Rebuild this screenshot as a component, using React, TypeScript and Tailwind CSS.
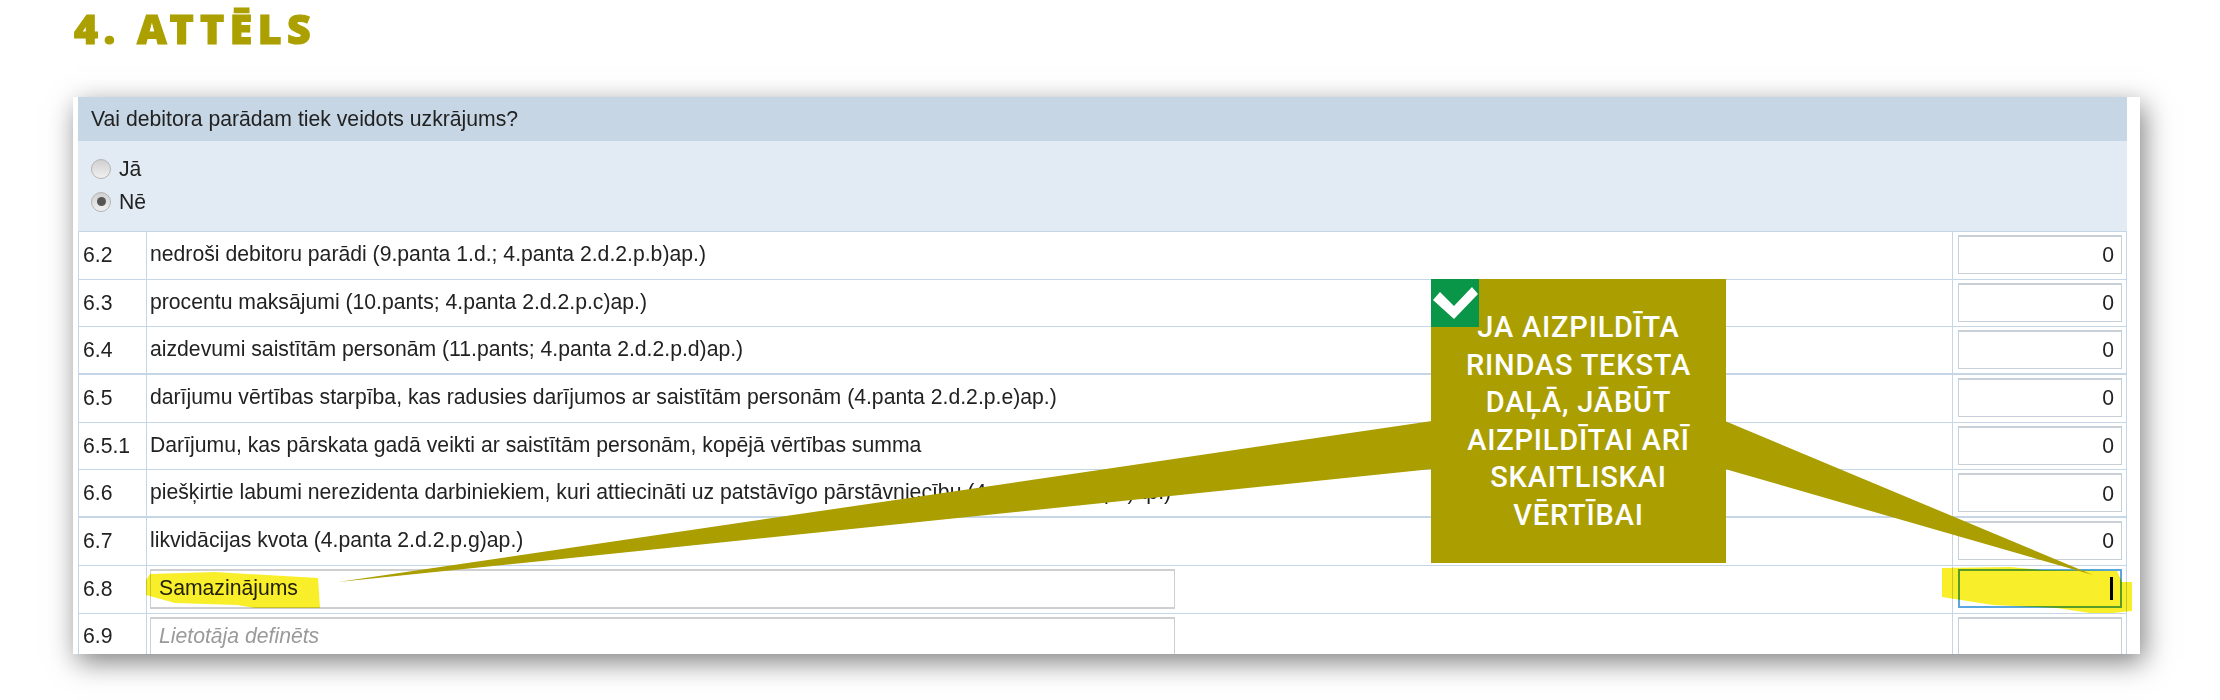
import React from 'react';

type Row = { no: string; text?: string; value?: string; input?: string; placeholder?: string; thick?: boolean; focus?: boolean };

const rows: Row[] = [
  { no: '6.2', text: 'nedroši debitoru parādi (9.panta 1.d.; 4.panta 2.d.2.p.b)ap.)', value: '0' },
  { no: '6.3', text: 'procentu maksājumi (10.pants; 4.panta 2.d.2.p.c)ap.)', value: '0' },
  { no: '6.4', text: 'aizdevumi saistītām personām (11.pants; 4.panta 2.d.2.p.d)ap.)', value: '0', thick: true },
  { no: '6.5', text: 'darījumu vērtības starpība, kas radusies darījumos ar saistītām personām (4.panta 2.d.2.p.e)ap.)', value: '0' },
  { no: '6.5.1', text: 'Darījumu, kas pārskata gadā veikti ar saistītām personām, kopējā vērtības summa', value: '0' },
  { no: '6.6', text: 'piešķirtie labumi nerezidenta darbiniekiem, kuri attiecināti uz patstāvīgo pārstāvniecību (4.panta 2.d.2.p.f)ap.)', value: '0', thick: true },
  { no: '6.7', text: 'likvidācijas kvota (4.panta 2.d.2.p.g)ap.)', value: '0' },
  { no: '6.8', input: 'Samazinājums', focus: true },
  { no: '6.9', placeholder: 'Lietotāja definēts' },
];

const calloutLines = ['JA AIZPILDĪTA', 'RINDAS TEKSTA', 'DAĻĀ, JĀBŪT', 'AIZPILDĪTAI ARĪ', 'SKAITLISKAI', 'VĒRTĪBAI'];

function Radio({ checked, label }: { checked?: boolean; label: string }) {
  return (
    <div className="flex items-center gap-2 h-[33px]">
      <span className="flex items-center justify-center w-[20px] h-[20px] rounded-full border border-[#b4b4b4] bg-gradient-to-b from-[#d0d0d0] to-[#f0f0f0]">
        {checked && <span className="w-[9px] h-[9px] rounded-full bg-[#555]" />}
      </span>
      <span>{label}</span>
    </div>
  );
}

function TableRow({ row }: { row: Row }) {
  return (
    <div
      className={`grid grid-cols-[68px_1806px_175px] h-[47.7px] border-b border-[#c5d6e6] ${row.thick ? 'border-b-2' : ''}`}
    >
      <div className="flex items-center pl-[4px] pb-[1px] border-l border-[#c5d6e6]">{row.no}</div>
      <div className={`flex items-start pl-[3px] border-l border-[#c5d6e6] ${row.text ? 'pt-[4px]' : 'pt-[3px]'}`}>
        {row.text ? (
          <span className="whitespace-nowrap leading-[36px]">{row.text}</span>
        ) : (
          <div className="flex items-center w-[1025px] h-[40px] pl-2 pb-[1px] border border-[#cfcfcf] border-t-2 border-b-2 bg-white">
            {row.input ?? <span className="italic text-[#9a9a9a]">{row.placeholder}</span>}
          </div>
        )}
      </div>
      <div className="flex items-start pt-[3px] pl-[5px] border-l border-r border-[#c5d6e6]">
        <div
          className={`flex items-center justify-end w-[164px] h-[39px] pr-[7px] border bg-white ${
            row.focus ? 'border-2 border-[#5aa7e0]' : 'border-[#c9cfd6] border-t-2'
          }`}
        >
          {row.value}
          {row.focus && <span className="w-[3px] h-[23px] bg-black" />}
        </div>
      </div>
    </div>
  );
}

export default function App() {
  return (
    <div className="relative w-[2220px] h-[700px] overflow-hidden bg-white font-['Liberation_Sans',sans-serif] text-[21.2px] text-[#222]">
      <h1 className="h-[97px] pl-[74px] pt-[3px] font-['Noto_Sans',sans-serif] text-[41px] leading-[50px] font-black tracking-[5.5px] [-webkit-text-stroke:1.2px_#aba000] text-[#aba000]">
        4. ATTĒLS
      </h1>

      <div className="ml-[73px] w-[2067px] h-[557px] overflow-hidden bg-white pl-[5px] pr-[13px] shadow-[4px_8px_26px_rgba(0,0,0,0.5)]">
        <div className="flex items-center h-[44px] pl-[13px] bg-[#c6d6e4]">
          Vai debitora parādam tiek veidots uzkrājums?
        </div>
        <div className="h-[91px] pl-[13px] pt-[11px] bg-[#e2ebf4] border-b border-[#c5d6e6]">
          <Radio label="Jā" />
          <Radio label="Nē" checked />
        </div>
        {rows.map((row) => (
          <TableRow key={row.no} row={row} />
        ))}
      </div>

      {/* yellow marker strokes */}
      <svg className="absolute inset-0 mix-blend-multiply" width="2220" height="700" viewBox="0 0 2220 700">
        <polygon
          fill="#f9ee2a"
          points="146,580 150,574 215,572 318,578 320,608 255,608 237,605 175,603 146,595"
        />
        <polygon
          fill="#f9ee2a"
          points="1942,568 2010,567 2043,570 2117,571 2122,582 2132,582 2132,611 2113,613 2090,613 2057,608 1993,605 1942,597"
        />
      </svg>

      {/* callout pointers */}
      <svg className="absolute inset-0" width="2220" height="700" viewBox="0 0 2220 700">
        <polygon fill="#aa9e00" points="1432,421 1432,469 338,582" />
        <polygon fill="#aa9e00" points="1725,421 1725,469 2093,575" />
      </svg>

      <div className="absolute left-[1431px] top-[279px] w-[295px] h-[284px] pt-[30px] bg-[#aa9e00] text-center font-['Roboto',sans-serif] text-[29px] leading-[37.6px] tracking-[0.8px] font-medium text-white">
        {calloutLines.map((line) => (
          <div key={line}>{line}</div>
        ))}
        <div className="absolute left-0 top-0 w-[48px] h-[48px] bg-[#0a9648]">
          <svg width="48" height="48" viewBox="0 0 48 48">
            <polygon fill="#fff" points="2,21 9,13 23,27 41,8 47,15 23,40" />
          </svg>
        </div>
      </div>
    </div>
  );
}
